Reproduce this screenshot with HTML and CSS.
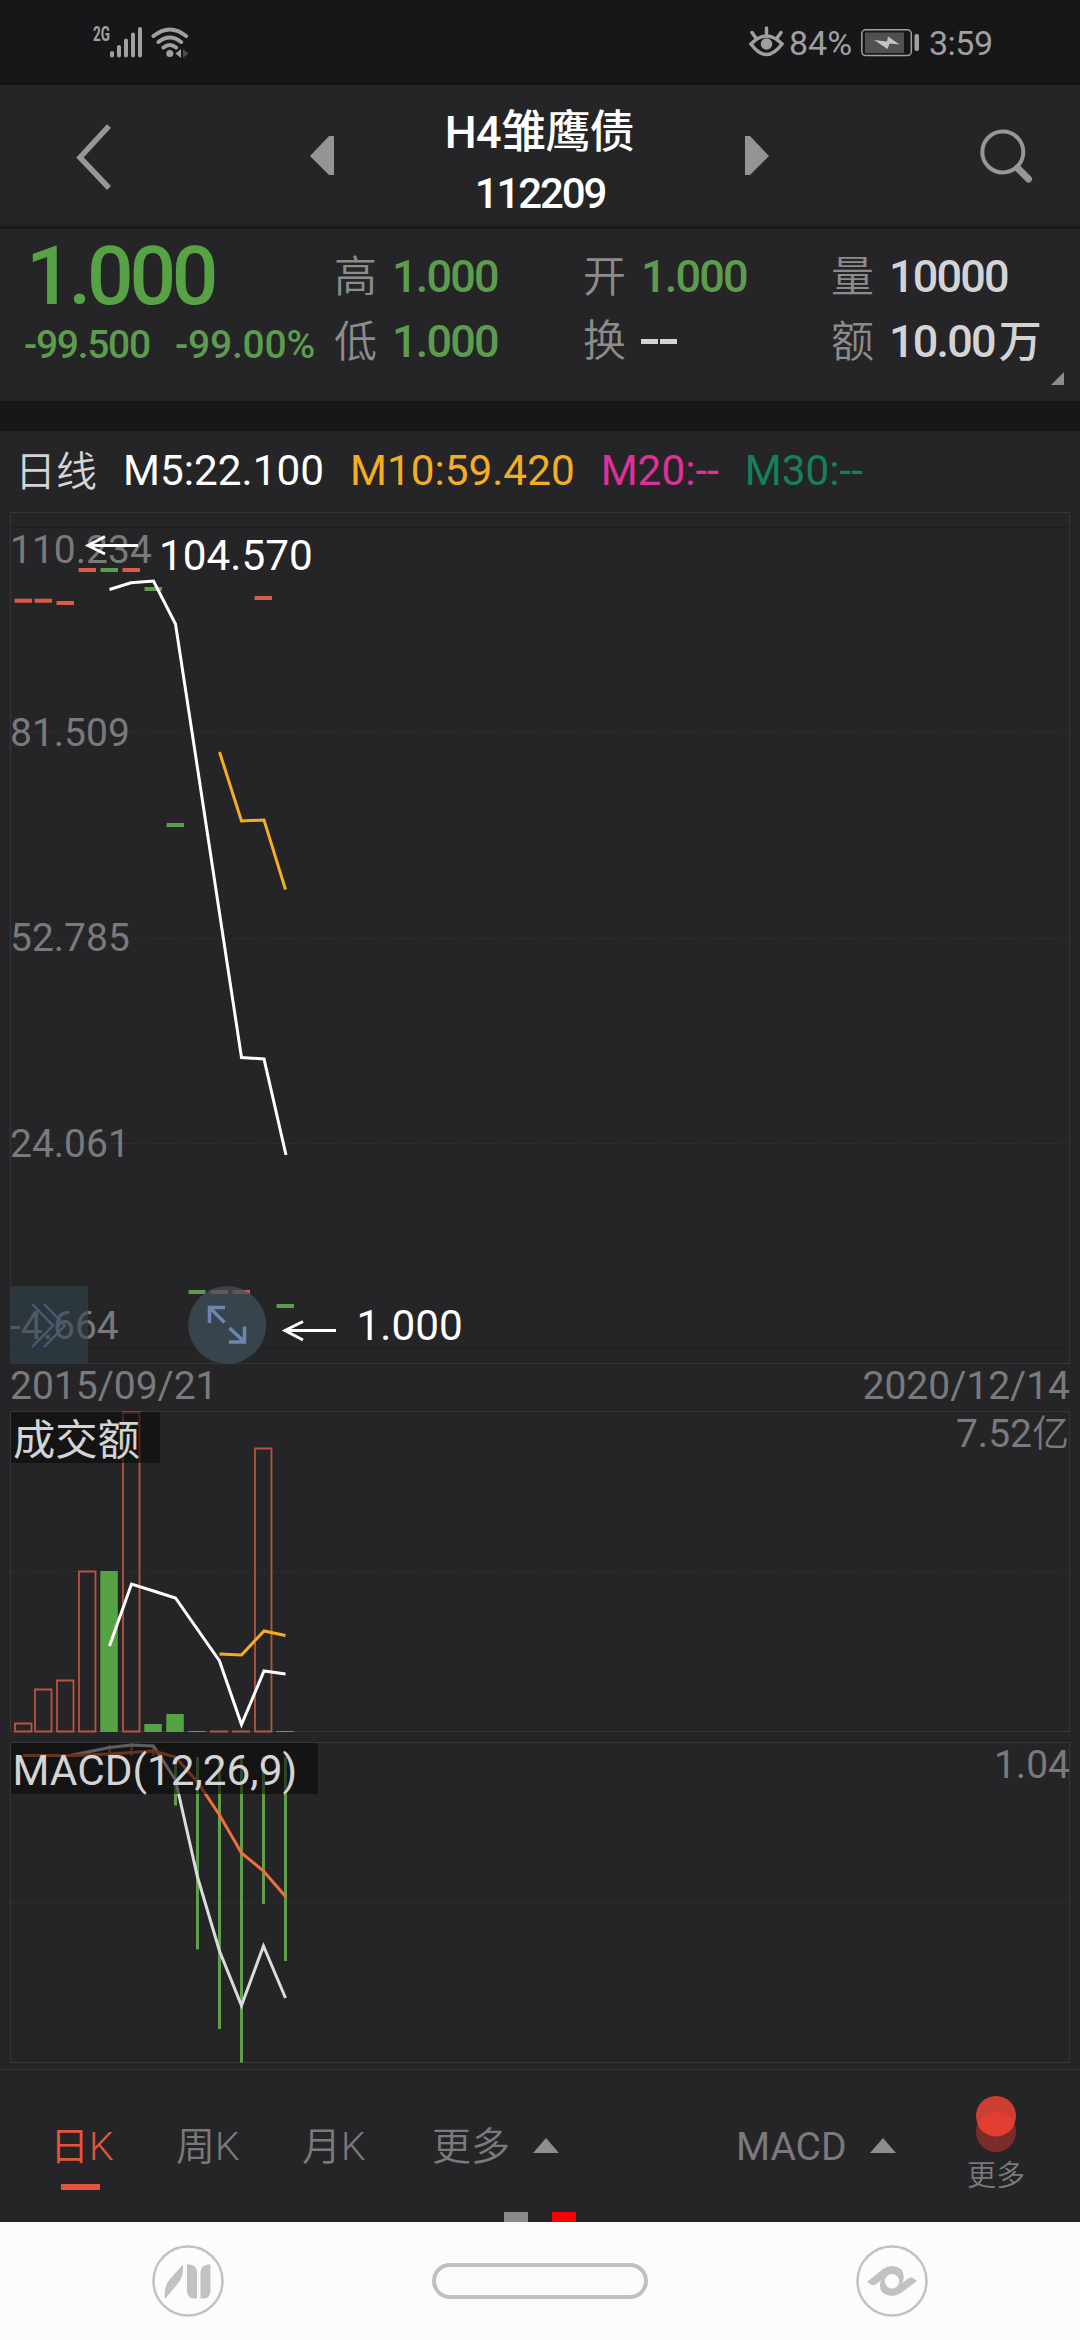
FILE: index.html
```html
<!DOCTYPE html>
<html lang="zh-CN">
<head>
  <meta charset="UTF-8"/>
  <meta name="viewport" content="width=device-width, initial-scale=1.0"/>
  <title>H4雏鹰债 112209</title>
  <link rel="stylesheet" href="styles.css">
</head>
<body>
  <div class="status-bar">
    <svg class="status-left" width="110" height="40" viewBox="86 22 110 40">
      <text class="net" x="93" y="41" textLength="17" lengthAdjust="spacingAndGlyphs">2G</text>
      <path class="signal" d="M112 53v2.5M119 47v8.500M126 40.500v15M133 34.500v21M140 29v26.500"/>
      <path class="wifi" d="M153.500 36q16.300-13 32.600 0M158.500 42q11.300-9 22.600 0M163.500 47.500q6.300-5 12.600 0"/>
      <circle class="fill" cx="169.800" cy="53.500" r="3.500"/>
      <path class="fill" d="M175.500 53.500l5.500-4.500v9z"/>
      <path class="fill dim" d="M188.500 53.500l-5.500-4.500v9z"/>
    </svg>
    <div class="status-right">
      <svg width="36" height="34" viewBox="748 27 36 34">
        <path class="eye" d="M750 45Q765.500 29 781 45Q765.500 66 750 45zM751 33.500l3.500 5M765.500 29v6M780 33.500l-3.500 5"/>
        <circle class="fill" cx="765.500" cy="45" r="5.800"/>
      </svg>
      <span class="percent">84%</span>
      <svg class="battery" width="60" height="30" viewBox="859 28 60 30">
        <rect x="860.800" y="29.800" width="49.500" height="25.800" rx="4" fill="none" stroke="#a0a0a2" stroke-width="1.500"/>
        <rect x="864" y="32.500" width="39" height="20.500" fill="#515153"/>
        <path d="M873 40l13 1.500 1-5 11.500 8-10-1-2 5.500z" fill="#c4c4c6"/>
        <rect x="913.500" y="34" width="4.500" height="17" rx="2" class="fill"/>
      </svg>
      <span class="clock">3:59</span>
    </div>
  </div>

  <header class="header">
    <svg class="back" width="44" height="70" viewBox="0 0 44 70"><path d="M39 5L10 36.500L39 67"/></svg>
    <svg width="24" height="40" viewBox="0 0 24 40"><path class="tri" d="M24 0h-5L0 20l19 19h5z"/></svg>
    <div class="title">
      <h1>H4雏鹰债</h1>
      <div class="code">112209</div>
    </div>
    <svg width="24" height="40" viewBox="0 0 24 40"><path class="tri" d="M0 0h5l19 20L5 39H0z"/></svg>
    <svg class="search" width="54" height="56" viewBox="979 129 54 56">
      <circle cx="1002.800" cy="153" r="20.500"/>
      <path d="M1017.500 169l11 11"/>
    </svg>
  </header>

  <section class="quote">
    <div class="price">
      <div class="last">1.000</div>
      <div class="change"><span class="diff">-99.500</span><span class="rate">-99.00%</span></div>
    </div>
    <div class="stats">
      <div class="stat"><label>高</label><b class="down">1.000</b></div>
      <div class="stat"><label>开</label><b class="down">1.000</b></div>
      <div class="stat"><label>量</label><b>10000</b></div>
      <div class="stat"><label>低</label><b class="down">1.000</b></div>
      <div class="stat"><label>换</label><b class="none"><i></i><i></i></b></div>
      <div class="stat"><label>额</label><b>10.00<em>万</em></b></div>
    </div>
    <svg class="corner" width="13" height="13" viewBox="0 0 13 13"><path d="M13 0v13H0z"/></svg>
  </section>

  <div class="ma-row">
    <span class="period">日线</span>
    <span class="m5">M5:22.100</span>
    <span class="m10">M10:59.420</span>
    <span class="m20">M20:--</span>
    <span class="m30">M30:--</span>
  </div>

  <!-- K线 -->
  <svg class="panel" width="1080" height="852" viewBox="0 512 1080 852">
    <path class="frame" d="M10.500 512.500h1059v851h-1059z"/>
    <path class="edge" d="M11 527.500h1058M11 1348.500h1058"/>
    <path class="grid" d="M11 732.500h1058M11 938.500h1058M11 1143.500h1058"/>
    <g class="axis">
      <text x="10" y="562.500">110.234</text>
      <text x="10" y="745.500">81.509</text>
      <text x="10" y="951">52.785</text>
      <text x="10" y="1156.500">24.061</text>
      <text x="10" y="1338.500">-4.664</text>
    </g>
    <path class="tick up" d="M14.500 600.700H32M34.500 600.700H52M56.500 603H74M78.500 570H96M122.500 570H140M254.500 598H272M210.500 1292H228M232.500 1292H250"/>
    <path class="tick dn" d="M100.500 570H118M144.500 589H162M166.500 825H184M188.500 1292H205.500M276.500 1306H294"/>
    <polyline class="line white" points="109.500,589.500 131,582.700 153.500,581 175.500,624 197.500,768 219.500,913 241.500,1057.500 264,1059 286,1155"/>
    <polyline class="line gold" points="219.500,752 241.500,821 264,820 285.500,889.500"/>
    <path class="arrow" d="M138 545.500H88M105 536.500L88 545.500L105 554M336 1330.500H285M303 1321.500L285 1330.500L303 1340"/>
    <text class="mark" x="159" y="570">104.570</text>
    <text class="mark" x="356.500" y="1340">1.000</text>
    <rect x="11" y="1286" width="77" height="77.500" fill="#32424c" fill-opacity=".6"/>
    <path d="M32 1304l21 21.500-21 21.500M44 1304l21 21.500-21 21.500" class="btn-icon soft"/>
    <circle cx="227.200" cy="1325" r="39" fill="#40505a" fill-opacity=".72"/>
    <path class="btn-icon" d="M225 1307.500h-15.500V1323M210 1308l14.500 14.500M229 1342h15.500v-15.500M244 1341.500L229.500 1328"/>
  </svg>
  <div class="dates"><span>2015/09/21</span><span>2020/12/14</span></div>

  <!-- 成交额 -->
  <svg class="panel" width="1080" height="331" viewBox="0 1411 1080 331">
    <path class="frame" d="M10.500 1411.500h1059v320h-1059z"/>
    <path class="grid" d="M11 1571.500h1058"/>
    <path class="bar up" d="M15 1723.500h16.500v8H15zM35 1689.500h16.500v42H35zM57 1680.500h16.500v51H57zM79 1571.500h16.500v160H79zM123 1412.500h16.500v319H123zM255 1448.500h16.500v283H255zM210 1731.500h18M232 1731.500h18"/>
    <path class="bar dn" d="M100.300 1571h17.500v161h-17.500zM144.300 1724h17.500v8h-17.500zM166.300 1714h17.500v18h-17.500zM188.300 1731h17.500v1h-17.500zM276.300 1731h17.500v1h-17.500z"/>
    <polyline class="line white" points="109.500,1646 131.500,1584 153.500,1591 175.500,1598 219.500,1661 241.500,1724.500 264,1671 285.500,1674"/>
    <polyline class="line gold" points="219.500,1654 241.500,1655 264,1631 285.500,1635.500"/>
    <rect class="mask" x="11" y="1412" width="149" height="51"/>
    <text class="name" x="13" y="1455">成交额</text>
    <text class="scale" x="1069" y="1446.500">7.52<tspan class="yi">亿</tspan></text>
  </svg>

  <!-- MACD -->
  <svg class="panel" width="1080" height="328" viewBox="0 1742 1080 328">
    <path class="frame" d="M10.500 1742.500h1059v320h-1059zM0 2069.500h1080"/>
    <path class="grid" d="M11 1902.500h1058"/>
    <path class="hist up" d="M87.500 1751v5M109.500 1745v11M131.500 1743v13M153.500 1746v10"/>
    <path class="hist dn" d="M175.500 1757v48.500M197.500 1757v192.500M219.500 1757v272M241.500 1757v305.500M263.500 1757v147M285.500 1757v204"/>
    <polyline class="line dif" points="23,1755.500 70,1755.500 87.500,1752 109.500,1747.500 131.500,1745 153.500,1746 175.500,1780 197.500,1877 219.500,1951 241.500,2005.500 263.500,1946 285.500,1998"/>
    <polyline class="line dea" points="23,1755.500 70,1755.500 109.500,1754 153.500,1751 175.500,1757 197.500,1782 219.500,1815 241.500,1853 263.500,1871 285.500,1896.500"/>
    <rect class="mask" x="11" y="1743" width="307" height="51"/>
    <text class="name" x="12.500" y="1785">MACD(12,26,9)</text>
    <text class="scale" x="1070" y="1777.500">1.04</text>
  </svg>

  <div class="tabs">
    <span class="tab active">日K</span>
    <span class="tab">周K</span>
    <span class="tab">月K</span>
    <span class="tab more">更多<i class="caret"></i></span>
    <span class="tab index">MACD<i class="caret"></i></span>
    <div class="extra">
      <svg width="42" height="58" viewBox="975 2095 42 58">
        <circle cx="996" cy="2132" r="20" fill="#7c2b2b"/>
        <circle cx="996" cy="2116" r="20" fill="#ce3e32"/>
        <path d="M977.500 2124a20 20 0 0 1 37 0a20 20 0 0 1-37 0z" fill="#e33d31"/>
      </svg>
      <span>更多</span>
    </div>
    <div class="pager"><i></i><i class="on"></i></div>
  </div>

  <nav class="nav">
    <svg width="74" height="74" viewBox="151 2244 74 74">
      <circle cx="188" cy="2281" r="34.500"/>
      <path d="M183 2264.500q1 12-5 19l-13 15.500q-1.500-13 5-20zM187 2264.500h3q7 1 7 8v26h-4q-6-1-6-8zM210.500 2264.500h-3q-7 1-7 8v26h4q6-1 6-8z"/>
    </svg>
    <div class="home"></div>
    <svg width="74" height="74" viewBox="855 2244 74 74">
      <circle cx="892" cy="2281" r="34.500"/>
      <path fill-rule="evenodd" d="M867 2282L883 2269Q892 2263 901 2269Q906 2275 902 2283L909 2278Q912 2276 917 2281L901 2293Q892 2299 883 2293Q878 2288 881 2280Q876 2286 872 2285zM892 2274a7.200 7.200 0 1 0 .1 0z"/>
    </svg>
  </nav>
</body>
</html>
```
FILE: styles.css
```css
* {
  margin: 0;
  padding: 0;
  box-sizing: border-box;
}
body {
  width: 1080px;
  height: 2340px;
  overflow: hidden;
  background: #252527;
  color: #d4d4d6;
  font-family: Roboto, "Noto Sans CJK SC", sans-serif;
}
svg {
  display: block;
  flex: none;
}
i, em {
  font-style: normal;
}

/* status bar */
.status-bar {
  height: 85px;
  display: flex;
  justify-content: space-between;
  align-items: flex-start;
  padding: 22px 87px 0 86px;
  background: #171719;
  border-bottom: 3px solid #111113;
  color: #a0a0a2;
  font-size: 34px;
  line-height: 40px;
}
.status-right {
  display: flex;
  align-items: center;
}
.percent {
  width: 64px;
  margin: 1px 7px 0 4px;
}
.clock {
  width: 64px;
  margin: 1px 0 0 9px;
  letter-spacing: -0.5px;
}
.net {
  font-size: 20px;
  font-weight: 700;
}
.fill, .net {
  fill: #a0a0a2;
}
.dim {
  fill: #4a4a4c;
}
.signal, .wifi, .eye {
  fill: none;
  stroke: #a0a0a2;
  stroke-width: 4;
  stroke-linecap: round;
}
.eye {
  stroke-width: 3.5;
}

/* header */
.header {
  height: 144px;
  display: flex;
  align-items: center;
  padding: 0 47px 0 70px;
  border-bottom: 3px solid #19191b;
}
.back {
  margin-right: 196px;
}
.back path {
  fill: none;
  stroke: #979797;
  stroke-width: 5.5;
}
.tri {
  fill: #949494;
}
.title {
  width: 411px;
  padding-top: 14px;
  color: #fff;
  text-align: center;
}
.title h1 {
  font-size: 45px;
  line-height: 62px;
  font-weight: 500;
  letter-spacing: -0.6px;
}
.code {
  padding-left: 1px;
  font-size: 42px;
  line-height: 60px;
  font-weight: 500;
  letter-spacing: -2.1px;
}
.search {
  margin-left: auto;
  fill: none;
  stroke: #979797;
  stroke-width: 4;
}
.search path {
  stroke-width: 7;
  stroke-linecap: round;
}

/* quote */
.quote {
  position: relative;
  height: 202px;
  display: flex;
  border-bottom: 30px solid #171717;
}
.price {
  width: 334px;
  padding-left: 24px;
  color: #57a244;
  font-weight: 500;
}
.last {
  padding-left: 2px;
  font-size: 82px;
  line-height: 94px;
  letter-spacing: -4.2px;
}
.change {
  display: flex;
  font-size: 39px;
  line-height: 46px;
  margin-top: -1px;
  color: #5d9c4e;
  white-space: nowrap;
}
.diff {
  width: 151px;
  letter-spacing: -1.3px;
}
.rate {
  letter-spacing: -0.2px;
}
.stats {
  display: grid;
  grid-template-columns: 249px 248px 249px;
  grid-template-rows: 65px 65px;
  padding-top: 15px;
}
.stat {
  display: flex;
  align-items: baseline;
  line-height: 65px;
}
.stat label {
  width: 58px;
  font-size: 43px;
  font-weight: 350;
  color: #8c8c8c;
}
.stat b {
  font-size: 45px;
  font-weight: 500;
  letter-spacing: -1.8px;
}
.stat b.down {
  color: #5d9c4e;
}
.stat em {
  margin-left: 4px;
  font-size: 43px;
}
.none {
  display: flex;
  gap: 2px;
  align-self: center;
}
.none i {
  width: 17px;
  height: 5px;
  background: #d4d4d6;
}
.corner {
  position: absolute;
  right: 16px;
  bottom: 16px;
  fill: #8c8c8c;
}

/* moving averages */
.ma-row {
  height: 81px;
  display: flex;
  align-items: center;
  gap: 26px;
  padding: 0 0 2px 15px;
  font-size: 42.3px;
  white-space: nowrap;
}
.period {
  margin-top: -5px;
  font-size: 41px;
  font-weight: 350;
}
.m5 { color: #fff; }
.m10 { color: #f4ae24; }
.m20 { color: #e0309c; }
.m30 { color: #14805c; }

/* charts */
.frame, .edge, .grid {
  fill: none;
  stroke: #363638;
}
.edge {
  stroke: #1c1c1e;
}
.grid {
  stroke: #303032;
  stroke-dasharray: 6 4;
}
.axis text {
  font-size: 39px;
  fill: #7a7a7c;
}
.mark {
  font-size: 42.3px;
  fill: #fff;
}
.name {
  font-size: 42.3px;
  fill: #d4d4d6;
}
.scale {
  font-size: 39px;
  fill: #7a7a7c;
  text-anchor: end;
}
.yi {
  font-size: 37px;
  font-weight: 350;
}
.mask {
  fill: #0a0a0a;
  fill-opacity: 0.6;
}
.tick {
  stroke-width: 4;
}
.tick.up { stroke: #d85c48; }
.tick.dn { stroke: #5d9c4e; }
.bar.up {
  fill: none;
  stroke: #b8543f;
  stroke-width: 1.8;
}
.bar.dn {
  fill: #57a244;
}
.hist {
  stroke-width: 3;
}
.hist.up { stroke: #b35343; }
.hist.dn { stroke: #5f9f4b; }
.line {
  fill: none;
  stroke-width: 3;
}
.white { stroke: #fff; }
.gold { stroke: #f4ae24; }
.dif { stroke: #dcdcdc; }
.dea { stroke: #f0703c; }
.arrow {
  fill: none;
  stroke: #fff;
  stroke-width: 3;
}
.btn-icon {
  fill: none;
  stroke: #6c86ae;
  stroke-width: 3.5;
}
.soft {
  stroke: #4a5878;
  stroke-width: 2.5;
}
.dates {
  height: 47px;
  display: flex;
  justify-content: space-between;
  padding: 0 10px;
  font-size: 39px;
  line-height: 45px;
  color: #7a7a7c;
}

/* bottom tabs */
.tabs {
  position: relative;
  height: 152px;
  display: flex;
  padding-left: 50px;
  font-size: 39px;
  font-weight: 350;
  line-height: 154px;
  color: #7a7a7c;
}
.tab {
  position: relative;
  flex: none;
  width: 126px;
}
.tab.active {
  color: #e4553f;
}
.tab.active::after {
  content: "";
  position: absolute;
  left: 11px;
  top: 114px;
  width: 39px;
  height: 6px;
  background: #e4553f;
}
.tab.more, .tab.index {
  width: 304px;
  padding-left: 4px;
  display: flex;
  gap: 23px;
}
.tab.index {
  width: 236px;
  font-weight: 400;
}
.caret {
  height: 0;
  margin-top: 68px;
  border: 13px solid transparent;
  border-top: 0;
  border-bottom: 15px solid #8e8e90;
}
.extra {
  display: flex;
  flex: none;
  flex-direction: column;
  align-items: center;
  width: 56px;
  padding-top: 25px;
  font-size: 29px;
  line-height: 46px;
  white-space: nowrap;
}
.pager {
  position: absolute;
  left: 504px;
  bottom: 0;
  display: flex;
  gap: 24px;
}
.pager i {
  width: 24px;
  height: 10px;
  background: #8a8a8a;
}
.pager .on {
  background: #f00;
}

/* system navigation */
.nav {
  height: 118px;
  display: flex;
  align-items: center;
  justify-content: space-between;
  padding: 0 151px;
  background: #fcfcfc;
}
.nav circle {
  fill: none;
  stroke: #c2c2c2;
  stroke-width: 2.5;
}
.nav path {
  fill: #c2c2c2;
}
.home {
  width: 216px;
  height: 36px;
  border: 4.5px solid #c0c0c0;
  border-radius: 18px;
}
```
